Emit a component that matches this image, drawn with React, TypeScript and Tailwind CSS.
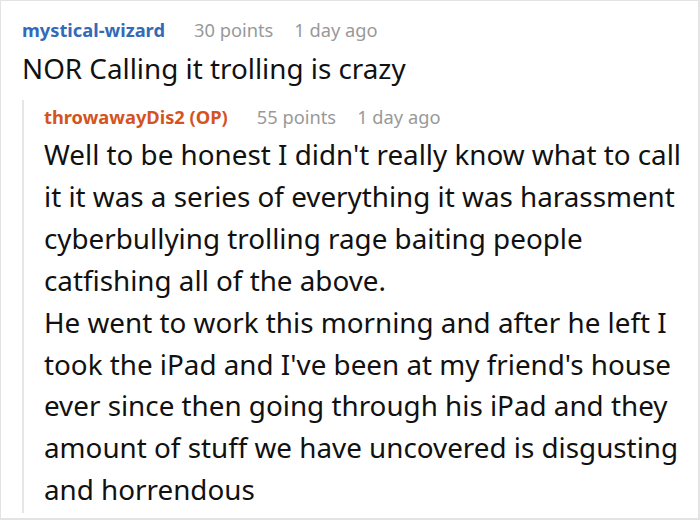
const font = { fontFamily: '"Noto Sans", "Open Sans", sans-serif' };

function Meta({ name, color, points, gap }: { name: string; color: string; points: number; gap: string }) {
  return (
    <div className="flex items-baseline text-[18.3px] leading-[24px] whitespace-nowrap">
      <span className={`font-bold ${color}`}>{name}</span>
      <span className={`${gap} text-[#999999]`}>{points} points</span>
      <span className="ml-[21px] text-[#999999]">1 day ago</span>
    </div>
  );
}

const lines = [
  "Well to be honest I didn't really know what to call",
  "it it was a series of everything it was harassment",
  "cyberbullying trolling rage baiting people",
  "catfishing all of the above.",
  "He went to work this morning and after he left I",
  "took the iPad and I've been at my friend's house",
  "ever since then going through his iPad and they",
  "amount of stuff we have uncovered is disgusting",
  "and horrendous",
];

export default function App() {
  return (
    <div
      className="w-[700px] h-[520px] bg-white border border-[#e3e3e3] border-r-2 border-b-2 overflow-hidden"
      style={font}
    >
      <div className="pl-[21px] pt-[17px]">
        <Meta name="mystical-wizard" color="text-[#336ab8]" points={30} gap="ml-[29px]" />
        <p className="text-[27.8px] leading-[36px] text-[#111111] mt-[8px] whitespace-nowrap">
          NOR Calling it trolling is crazy
        </p>
        <div className="mt-[14px] border-l-2 border-[#e6e6e6] pl-[20px] pt-[5px] pb-[2px]">
          <Meta name="throwawayDis2 (OP)" color="text-[#d4531e]" points={55} gap="ml-[29px]" />
          <div className="text-[27.8px] leading-[41.9px] text-[#111111] mt-[5px]">
            {lines.map((l) => (
              <p key={l} className="whitespace-nowrap">{l}</p>
            ))}
          </div>
        </div>
      </div>
    </div>
  );
}
